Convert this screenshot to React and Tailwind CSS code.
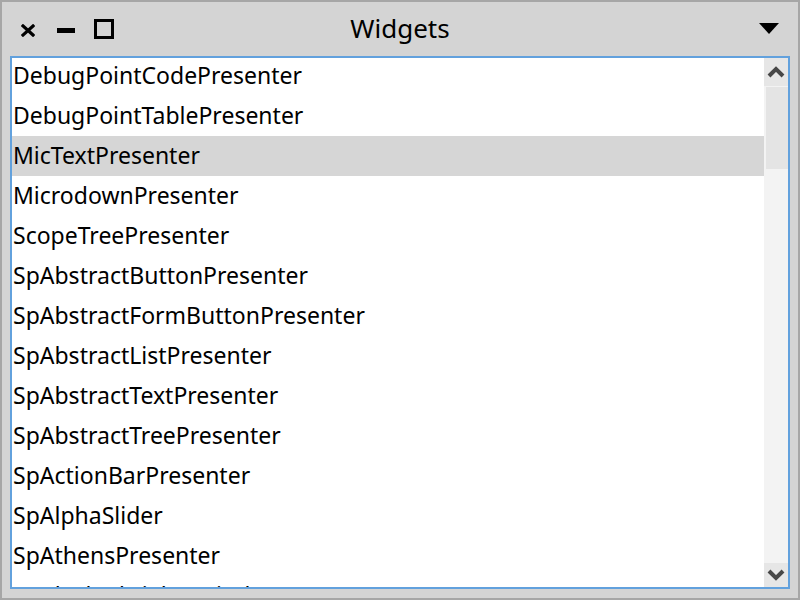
import React from "react";

const items = [
  "DebugPointCodePresenter",
  "DebugPointTablePresenter",
  "MicTextPresenter",
  "MicrodownPresenter",
  "ScopeTreePresenter",
  "SpAbstractButtonPresenter",
  "SpAbstractFormButtonPresenter",
  "SpAbstractListPresenter",
  "SpAbstractTextPresenter",
  "SpAbstractTreePresenter",
  "SpActionBarPresenter",
  "SpAlphaSlider",
  "SpAthensPresenter",
  "SpBlockedDialogWindowPresenter",
];

export default function App() {
  return (
    <div
      className="w-[800px] h-[600px] border-2 border-[#a6a6a6] bg-[#d4d4d4] flex flex-col overflow-hidden"
      style={{ fontFamily: '"Noto Sans", sans-serif' }}
    >
      <div className="h-[54px] shrink-0 relative flex items-center">
        <div className="flex items-center pl-[19px]">
          <svg width="14" height="13" viewBox="0 0 14 13" className="mt-[2px]">
            <path d="M2 2 L12 11 M12 2 L2 11" stroke="#000" strokeWidth="3.2" strokeLinecap="square" />
          </svg>
          <div className="ml-[22px] w-[18px] h-[5px] bg-black mt-[2px]" />
          <div className="ml-[19px] w-[20px] h-[20px] border-[3.5px] border-black" />
        </div>
        <div className="absolute inset-0 flex items-center justify-center pb-[3px]">
          <span className="text-[26px] text-black leading-none">Widgets</span>
        </div>
        <div className="ml-auto mr-[19px]">
          <svg width="20" height="12" viewBox="0 0 20 12">
            <polygon points="0,0 20,0 10,11" fill="#000" />
          </svg>
        </div>
      </div>
      <div className="mx-[8px] h-[533px] border-2 border-[#62a1dd] bg-white flex">
        <div className="flex-1 overflow-hidden -mt-[2px]">
          {items.map((t) => (
            <div
              key={t}
              className={
                "h-[40px] flex items-center pl-[1px] pb-[3px] text-[23px] leading-[28px] text-black whitespace-nowrap " +
                (t === "MicTextPresenter" ? "bg-[#d6d6d6]" : "")
              }
            >
              {t}
            </div>
          ))}
        </div>
        <div className="w-[24px] shrink-0 flex flex-col bg-[#f3f3f3]">
          <div className="h-[28px] bg-[#e6e6e6] flex items-center justify-center">
            <svg width="18" height="12" viewBox="0 0 18 12">
              <polyline points="2,10 9,3 16,10" fill="none" stroke="#474747" strokeWidth="4" />
            </svg>
          </div>
          <div className="ml-[2px] mt-[1px] h-[82px] bg-[#e4e4e4]" />
          <div className="flex-1" />
          <div className="h-[24px] bg-[#e6e6e6] flex items-center justify-center">
            <svg width="18" height="12" viewBox="0 0 18 12">
              <polyline points="2,2 9,9 16,2" fill="none" stroke="#474747" strokeWidth="4" />
            </svg>
          </div>
        </div>
      </div>
    </div>
  );
}
